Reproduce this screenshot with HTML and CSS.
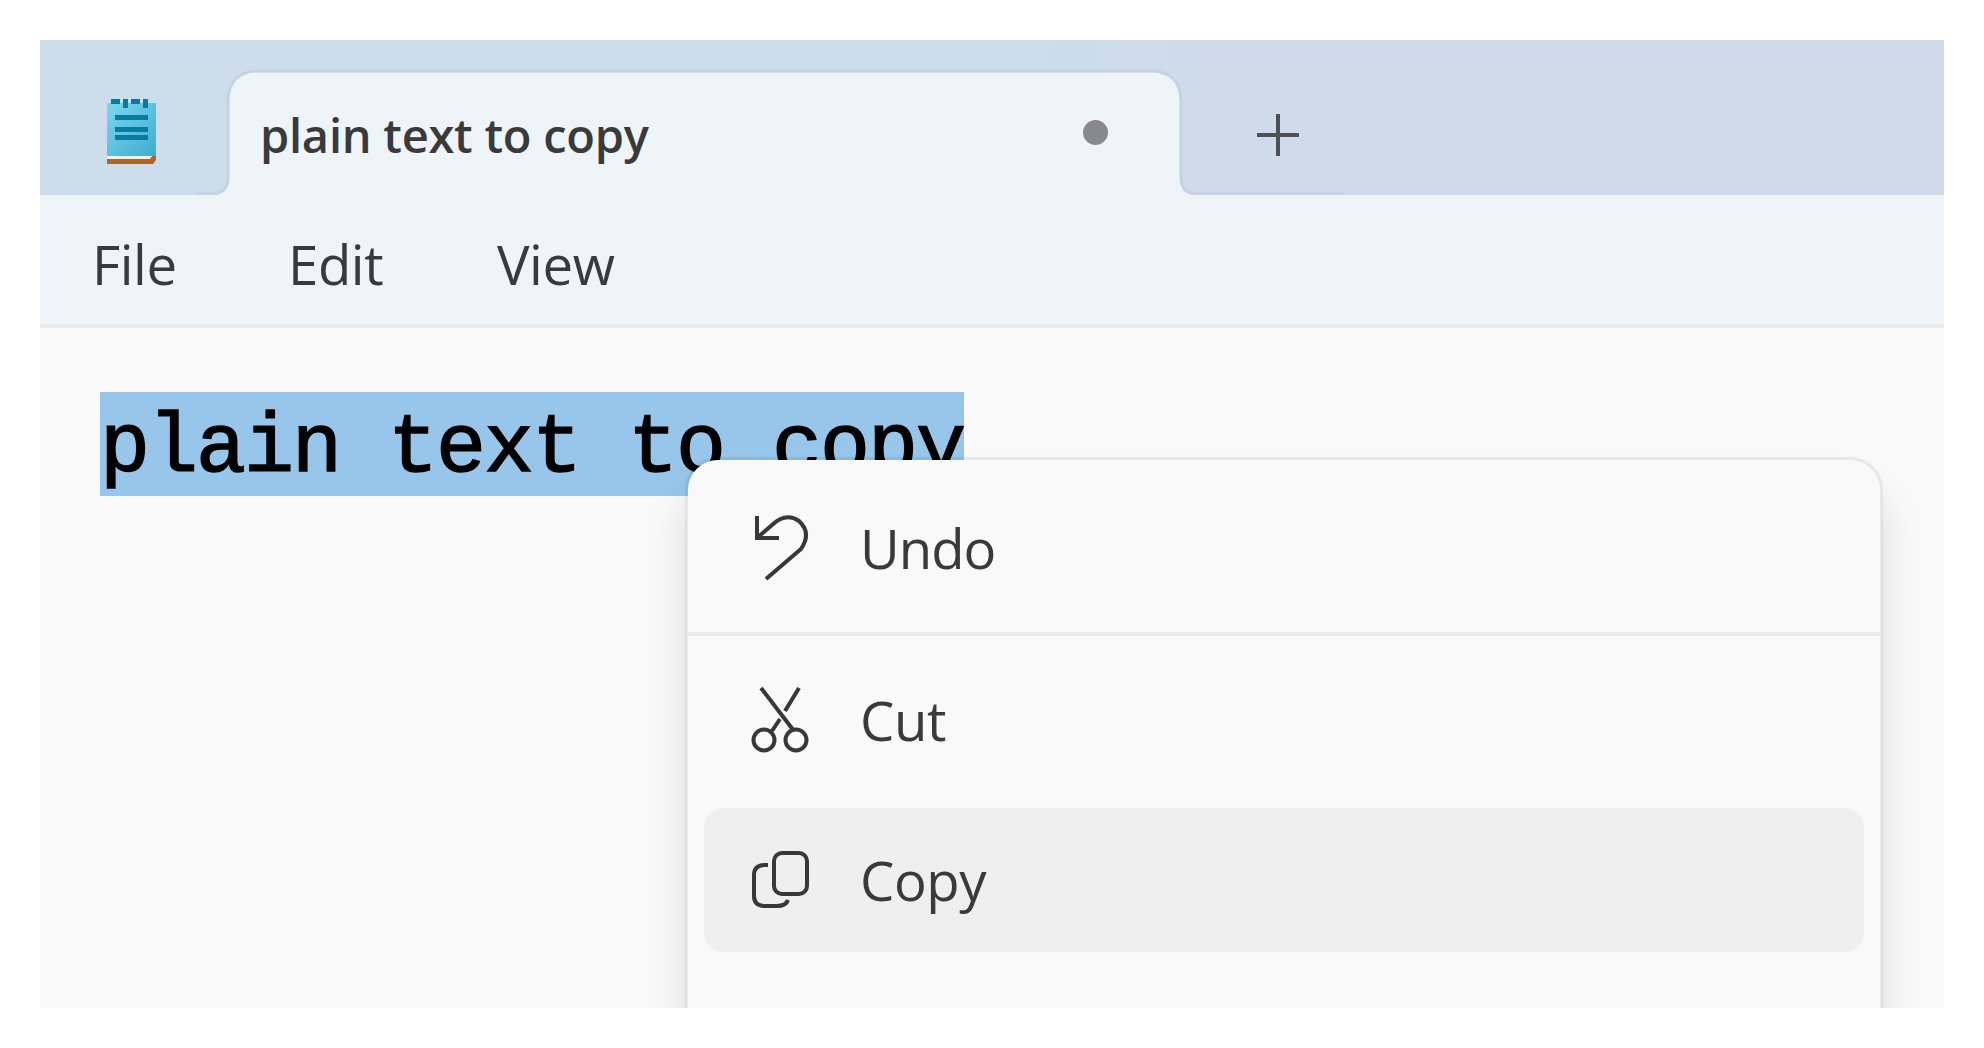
FILE: index.html
```html
<!DOCTYPE html>
<html lang="en">
<head>
<meta charset="utf-8">
<title>plain text to copy</title>
<link rel="stylesheet" href="styles.css">
</head>
<body>
<main class="window">
  <header class="titlebar">
    <svg class="tab-shape" width="1160" height="128" viewBox="0 0 1160 128">
      <path class="tab-fill" d="M8 127 H16 Q33 127 33 110 V34 Q33 4 63 4 H954 Q984 4 984 34 V110 Q984 127 1000 127 V128 H8 Z"/>
      <path class="tab-line" d="M0 125.500 H16 Q32 125.500 32 109 V34 Q32 3 63 3 H954 Q985 3 985 34 V109 Q985 125.500 1000 125.500 H1149"/>
    </svg>
    <svg class="app-icon" width="50" height="66" viewBox="0 0 50 66">
      <defs><linearGradient id="pad" x1="0" y1="0" x2="1" y2="1"><stop offset="0" stop-color="#7bd7f1"/><stop offset="1" stop-color="#41accd"/></linearGradient></defs>
      <path d="M0 56H49V59L45 61H0Z" fill="#eef1f2"/>
      <path d="M0 60H43L46 56H49V61L46 65H0Z" fill="#b06428"/>
      <rect y="4" width="49" height="53" rx="1" fill="url(#pad)"/>
      <path d="M4 0h9v5H4zM16 0h5v9h-5zM24 0h9v5h-9zM36 0h5v9h-5zM8 16h33v5H8zM8 28h33v5H8zM8 36h33v5H8z" fill="#087c9f"/>
    </svg>
    <div class="tab"><span class="tab-title">plain text to copy</span><span class="dirty-dot"></span></div>
    <svg class="new-tab" width="44" height="44" viewBox="0 0 44 44"><path d="M1 22H43M22 1V43"/></svg>
  </header>
  <nav class="menubar"><span class="menu-file">File</span><span class="menu-edit">Edit</span><span class="menu-view">View</span></nav>
  <section class="editor">
    <span class="selection">plain text to copy</span>
    <div class="context-menu">
      <div class="item">
        <svg class="icon" width="60" height="70" viewBox="0 0 60 70"><path d="M5 3V25H27M5 25L20 12Q34 -1 47 8Q60 20 49 36L14 66"/></svg>
        <span class="undo">Undo</span>
      </div>
      <hr class="separator">
      <div class="item">
        <svg class="icon" width="60" height="70" viewBox="0 0 60 70"><path d="M9 3L42 46M47 3L33 26M28 34L20 46"/><circle cx="12" cy="55" r="10.500"/><circle cx="44" cy="55" r="10.500"/></svg>
        <span class="cut">Cut</span>
      </div>
      <div class="item active">
        <svg class="icon" width="60" height="70" viewBox="0 0 60 70"><rect x="22" y="8" width="33" height="41" rx="8"/><path d="M16 20H13Q2 20 2 30V51Q2 61 13 61H25Q34 61 36 55"/></svg>
        <span class="copy">Copy</span>
      </div>
    </div>
  </section>
</main>
</body>
</html>
```
FILE: styles.css
```css
* { box-sizing: border-box; }
body {
  margin: 0;
  padding: 40px;
  background: #fff;
  color: #383a3c;
  font: 400 54.5px/72px "Open Sans", "Noto Sans", sans-serif;
}
.window {
  display: flex;
  flex-direction: column;
  width: 1904px;
  height: 968px;
  overflow: hidden;
  background: #f9f9f9;
}
.titlebar {
  position: relative;
  display: flex;
  align-items: flex-start;
  height: 155px;
  flex: none;
  background: linear-gradient(110deg, #cdddeb 0%, #cdddeb 50%, #cfdbeb 62%, #cfdbeb 100%);
}
.tab-shape { position: absolute; left: 156px; top: 28px; }
.tab-fill { fill: #eff4f9; }
.tab-line { fill: none; stroke: #c5d3e2; stroke-width: 3; }
.app-icon { margin: 59px 0 0 67px; }
.tab {
  position: relative;
  display: flex;
  align-items: center;
  justify-content: space-between;
  width: 952px;
  height: 123px;
  margin: 32px 0 0 71px;
  padding: 2px 72px 0 32px;
}
.tab-title {
  font-size: 47px;
  font-weight: 600;
  line-height: 64px;
  letter-spacing: -.25px;
  white-space: nowrap;
}
.dirty-dot { width: 25px; height: 25px; margin-bottom: 5px; border-radius: 50%; background: #88898c; }
.new-tab { position: relative; margin: 73px 0 0 76px; fill: none; stroke: #4d5156; stroke-width: 4; }
.menubar {
  display: flex;
  align-items: center;
  height: 133px;
  flex: none;
  padding: 9px 0 0 52px;
  border-bottom: 4px solid #e5ebef;
  background: #eff4f9;
  letter-spacing: -.4px;
}
.menubar span { width: 196px; }
.menubar .menu-edit { width: 209px; }
.editor { position: relative; flex: 1; padding: 64px 60px; }
.selection {
  display: block;
  width: 864px;
  height: 104px;
  padding-top: 5px;
  background: #97c6ea;
  color: #000;
  font: 83.333px/104px "Liberation Mono", monospace;
  letter-spacing: -2px;
  white-space: nowrap;
  -webkit-text-stroke: 1.5px #000;
}
.context-menu {
  position: absolute;
  left: 645px;
  top: 129px;
  width: 1198px;
  height: 680px;
  padding: 16px;
  border: 3px solid rgba(0, 0, 0, .065);
  border-radius: 33px;
  background: #f9f9f9;
  background-clip: padding-box;
  box-shadow: 0 32px 40px rgba(0, 0, 0, .11);
}
.item {
  display: flex;
  align-items: center;
  height: 144px;
  margin-bottom: 16px;
  padding-left: 48px;
  border-radius: 20px;
}
.item.active { background: #efefef; }
.icon { flex: none; margin-right: 48px; fill: none; stroke: #383838; stroke-width: 4; overflow: visible; }
.undo { letter-spacing: -1px; }
.cut, .copy { letter-spacing: -.4px; }
.separator { height: 4px; margin: -4px -16px 12px; border: 0; background: #ebebeb; }
```
